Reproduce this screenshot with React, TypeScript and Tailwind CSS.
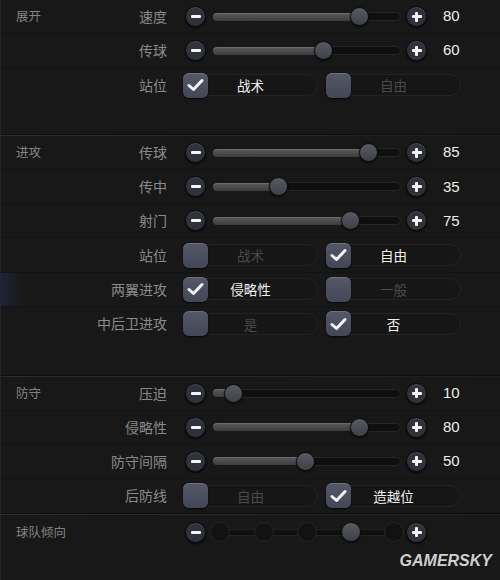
import type { ReactNode } from 'react';

const FONT = "font-['Noto_Sans_CJK_SC','Noto_Sans',sans-serif]";

function RoundButton({ plus }: { plus?: boolean }) {
  return (
    <div className="w-[21px] h-[21px] shrink-0 rounded-full bg-[#2f323b] border border-[#0b0b0c] shadow-[0_1px_2px_rgba(0,0,0,0.8),inset_0_1px_0_rgba(255,255,255,0.12)] flex items-center justify-center relative">
      <div className="w-[10px] h-[3px] rounded-[1px] bg-[#f2f2f2]" />
      {plus && <div className="absolute w-[3px] h-[10px] rounded-[1px] bg-[#f2f2f2]" />}
    </div>
  );
}

function Slider({ value }: { value: number }) {
  const pct = value / 100;
  return (
    <div className="flex items-center w-[188px] ml-[7px] mr-[5px] h-[20px]">
      <div
        className="h-[8px] shrink-0 rounded-l-full bg-gradient-to-b from-[#5c5c5e] to-[#3c3c3e] shadow-[inset_0_1px_0_rgba(255,255,255,0.1)]"
        style={{ width: `${2 + pct * 180}px` }}
      />
      <div className="w-[19px] h-[19px] -mx-[9px] z-10 shrink-0 rounded-full bg-gradient-to-b from-[#585b62] to-[#3e4047] border border-[#0d0d0e] shadow-[0_1px_2px_rgba(0,0,0,0.7)]" />
      <div className="flex-1 h-[9px] rounded-r-full bg-[#0f0f10] border border-[#262627]" />
    </div>
  );
}

function Notches({ pos }: { pos: number }) {
  return (
    <div className="w-[194px] ml-[4px] mr-[2px] h-[20px] flex items-center relative">
      <div className="absolute left-[8px] right-[8px] h-[7px] bg-[#0f0f10] border-y border-[#222223]" />
      <div className="relative flex justify-between w-full">
        {[0, 1, 2, 3, 4].map((i) =>
          i === pos ? (
            <div
              key={i}
              className="w-[20px] h-[20px] rounded-full bg-gradient-to-b from-[#585b62] to-[#3e4047] border border-[#0d0d0e] shadow-[0_1px_2px_rgba(0,0,0,0.7)]"
            />
          ) : (
            <div key={i} className="w-[20px] h-[20px] rounded-full bg-[#121213] border border-[#252526]" />
          )
        )}
      </div>
    </div>
  );
}

function Check({ on, label }: { on: boolean; label: string }) {
  return (
    <div className="relative w-[135px] h-[24px] flex items-center">
      <div className="absolute inset-y-[1px] left-0 right-0 rounded-[11px] border border-[#232324] bg-[#161616]" />
      <div className="relative w-[25px] h-[25px] rounded-[6px] bg-gradient-to-b from-[#555868] to-[#434655] shadow-[0_1px_2px_rgba(0,0,0,0.8),inset_0_1px_0_rgba(255,255,255,0.15)] flex items-center justify-center">
        {on && (
          <svg width="17" height="14" viewBox="0 0 17 14">
            <path d="M2 7.5 L6.5 11.5 L15 2.5" fill="none" stroke="#f4f4f4" strokeWidth="3" strokeLinecap="round" strokeLinejoin="round" />
          </svg>
        )}
      </div>
      <span className={`relative flex-1 text-center pr-[25px] text-[13.5px] ${on ? 'text-[#f0f0f0]' : 'text-[#4a4a4a]'}`}>{label}</span>
    </div>
  );
}

function Row({ section, label, children, className = '' }: { section?: string; label: string; children: ReactNode; className?: string }) {
  return (
    <div className={`flex items-center h-[34.3px] border-b border-[#131313] ${className}`}>
      <div className="w-[170px] flex items-center justify-between pl-[15px] pr-[4px] shrink-0">
        <span className="text-[12.5px] text-[#828282]">{section ?? ''}</span>
        <span className="text-[14px] text-[#8a8a8a]">{label}</span>
      </div>
      <div className="flex items-center pl-[14px]">{children}</div>
    </div>
  );
}

function SliderRow({ section, label, value }: { section?: string; label: string; value: number }) {
  return (
    <Row section={section} label={label}>
      <RoundButton />
      <Slider value={value} />
      <RoundButton plus />
      <span className="ml-[16px] text-[15px] text-[#ececec] font-['Liberation_Sans',Arial,sans-serif]">{value}</span>
    </Row>
  );
}

function CheckRow({ section, label, a, b, first, className }: { section?: string; label: string; a: string; b: string; first: boolean; className?: string }) {
  return (
    <Row section={section} label={label} className={className}>
      <div className="flex gap-[8px] -ml-[2px]">
        <Check on={first} label={a} />
        <Check on={!first} label={b} />
      </div>
    </Row>
  );
}

function Divider() {
  return <div className="h-[2px] bg-gradient-to-r from-[#2e2e2e] via-[#262626] to-[#1e1e1e] border-t border-[#0e0e0e]" />;
}

export default function App() {
  return (
    <div className={`w-[500px] h-[580px] bg-[#181818] overflow-hidden flex flex-col border-l border-[#252525] ${FONT}`}>
      {/* 展开 */}
      <SliderRow section="展开" label="速度" value={80} />
      <SliderRow label="传球" value={60} />
      <CheckRow label="站位" a="战术" b="自由" first={true} className="border-b-0" />
      <div className="h-[32px]" />
      <Divider />

      {/* 进攻 */}
      <SliderRow section="进攻" label="传球" value={85} />
      <SliderRow label="传中" value={35} />
      <SliderRow label="射门" value={75} />
      <CheckRow label="站位" a="战术" b="自由" first={false} />
      <CheckRow
        label="两翼进攻"
        a="侵略性"
        b="一般"
        first={true}
        className="bg-[linear-gradient(to_right,#1c2436_0px,#181818_22px)]"
      />
      <CheckRow label="中后卫进攻" a="是" b="否" first={false} className="border-b-0" />
      <div className="h-[34px]" />
      <Divider />

      {/* 防守 */}
      <SliderRow section="防守" label="压迫" value={10} />
      <SliderRow label="侵略性" value={80} />
      <SliderRow label="防守间隔" value={50} />
      <CheckRow label="后防线" a="自由" b="造越位" first={false} className="border-b-0" />
      <Divider />
      <Row section="球队倾向" label="" className="border-b-0">
        <RoundButton />
        <Notches pos={3} />
        <RoundButton plus />
      </Row>

      <div className="flex-1 flex items-end justify-end pr-[8px] pb-[7px]">
        <span className="font-['Liberation_Sans',Arial,sans-serif] italic font-bold text-[16px] text-[#cfcfcf]">GAMERSKY</span>
      </div>
    </div>
  );
}
